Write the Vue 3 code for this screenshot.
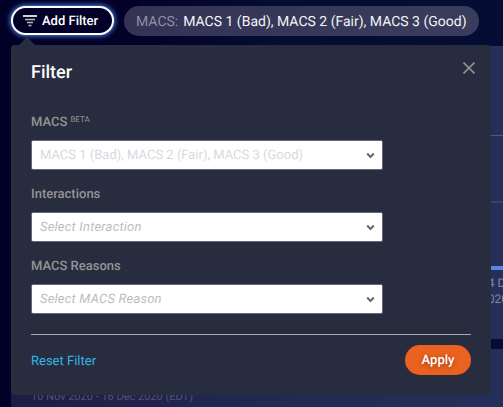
<script setup>
const chipText = 'MACS 1 (Bad), MACS 2 (Fair), MACS 3 (Good)'
const fields = [
  { label: 'MACS', tag: 'BETA', text: chipText, filled: true },
  { label: 'Interactions', text: 'Select Interaction' },
  { label: 'MACS Reasons', text: 'Select MACS Reason' }
]
</script>

<template>
  <div class="page">
    <header class="toolbar">
      <button class="add" type="button">
        <svg width="14" height="12" viewBox="0 0 14 12">
          <path d="M0 1H14" stroke="#d2d0d3" stroke-width="2" />
          <path d="M2 4.5H12M4 7.5H10M5.5 10.5H8.5" stroke="#b9b7bf" stroke-width="1.3" />
        </svg>
        <span>Add Filter</span>
      </button>
      <div class="chip"><span class="chip-key">MACS:</span><span>{{ chipText }}</span></div>
    </header>

    <main class="dashboard">
      <section class="card chart">
        <div class="plot">
          <div class="grid thin"></div>
          <div class="grid thick"></div>
          <div class="series"></div>
        </div>
        <div class="tick">14 Dec<br />2020</div>
      </section>
      <section class="card range">10 Nov 2020 - 16 Dec 2020 (EDT)</section>
    </main>

    <div class="popover">
      <div class="head">
        <h2>Filter</h2>
        <svg class="close" width="12" height="12" viewBox="0 0 12 12">
          <path d="M.5 .5L11.5 11.5M11.5 .5L.5 11.5" stroke="#92938f" stroke-width="1.6" fill="none" />
        </svg>
      </div>
      <div v-for="f in fields" :key="f.label" class="field">
        <div class="label">{{ f.label }}<span v-if="f.tag" class="beta">{{ f.tag }}</span></div>
        <div class="select" :class="{ filled: f.filled }">
          <span>{{ f.text }}</span>
          <svg width="9" height="7" viewBox="0 0 9 7">
            <path d="M1.2 1.5L4.5 5L7.8 1.5" stroke="#686868" stroke-width="1.9" fill="none" />
          </svg>
        </div>
      </div>
      <footer class="foot">
        <a class="reset">Reset Filter</a>
        <button class="apply" type="button">Apply</button>
      </footer>
    </div>
  </div>
</template>

<style>
body {
  margin: 0;
  overflow: hidden;
}
</style>

<style scoped>
.page {
  position: relative;
  width: 503px;
  height: 407px;
  overflow: hidden;
  box-sizing: border-box;
  background: linear-gradient(90deg, #010026 0, #02012a 130px, #040c31 270px, #050d34 503px);
  font-family: Roboto, sans-serif;
  text-rendering: geometricPrecision;
  white-space: nowrap;
}
.toolbar {
  display: flex;
  gap: 10px;
  height: 46px;
  padding: 6px 0 0 11px;
  box-sizing: border-box;
}
.add {
  display: flex;
  align-items: center;
  gap: 5px;
  width: 103px;
  height: 29px;
  padding: 0 0 0 10px;
  box-sizing: border-box;
  border: 2px solid #fff;
  border-radius: 15px;
  background: #020027;
  box-shadow: 0 0 5px 1px #4c82e8;
  color: #fff;
  font: 500 13px/16px Roboto, sans-serif;
  text-rendering: inherit;
}
.add span {
  padding-top: 2px;
}
.chip {
  display: flex;
  gap: 5px;
  width: 355px;
  height: 30px;
  padding-left: 12px;
  box-sizing: border-box;
  border-radius: 15px;
  background: linear-gradient(90deg, #343355, #393d5d);
  color: #f4f4f6;
  font-size: 14px;
  line-height: 32px;
}
.chip-key {
  color: #8f8fa4;
}
.dashboard {
  display: flex;
  flex-direction: column;
  gap: 10px;
  padding-left: 11px;
}
.card {
  background: linear-gradient(90deg, #1f1c43 0, #202850 220px, #25305a 100%);
}
.chart {
  display: flex;
  flex-direction: column;
  height: 293px;
  box-sizing: border-box;
}
.plot {
  display: flex;
  flex-direction: column;
  height: 224px;
  padding-top: 89px;
  box-sizing: border-box;
}
.grid.thin {
  height: 1px;
  background: #55596f;
}
.grid.thick {
  height: 2px;
  margin-top: 65px;
  background: #3d435f;
}
.series {
  height: 3px;
  margin-top: 63px;
  background: #4d86f5;
  border-top: 1px solid #7a86a8;
}
.tick {
  padding: 5px 0 0 470px;
  color: #82869a;
  font-size: 12px;
  line-height: 16px;
}
.range {
  height: 58px;
  padding: 39px 0 0 20px;
  box-sizing: border-box;
  color: #505575;
  font-size: 11px;
  line-height: 17px;
}
.popover {
  position: absolute;
  left: 11px;
  top: 45px;
  width: 480px;
  height: 350px;
  padding: 0 20px;
  box-sizing: border-box;
  border-radius: 4px;
  background: #282c3f;
}
.popover::before {
  content: '';
  position: absolute;
  left: 8px;
  top: -8px;
  border: 8px solid transparent;
  border-top: 0;
  border-bottom-color: #282c3f;
}
.head {
  display: flex;
  justify-content: space-between;
  height: 67px;
}
h2 {
  margin: 17px 0 0;
  color: #fff;
  font-size: 18px;
  font-weight: 500;
  line-height: 22px;
}
.close {
  margin: 17px -4px 0 0;
}
.field {
  height: 72px;
}
.label {
  display: flex;
  height: 28px;
  color: #949494;
  font-size: 13px;
  font-weight: 500;
  line-height: 22px;
}
.beta {
  margin-left: 3px;
  font-size: 8px;
  font-weight: 400;
  line-height: 15px;
}
.select {
  display: flex;
  align-items: center;
  justify-content: space-between;
  width: 352px;
  height: 30px;
  padding: 0 7px 0 8px;
  box-sizing: border-box;
  border: 1px solid #65677a;
  border-radius: 2px;
  background: #fff;
  color: #bdbdbd;
  font-size: 13px;
  font-style: italic;
  letter-spacing: 0.21px;
}
.select.filled {
  color: #d9d9df;
  font-style: normal;
  letter-spacing: 0;
}
.foot {
  display: flex;
  align-items: flex-start;
  justify-content: space-between;
  margin-top: 6px;
  padding-top: 10px;
  border-top: 1px solid #a9a9ab;
}
.reset {
  color: #35b5e5;
  font-size: 13px;
  line-height: 33px;
}
.apply {
  width: 66px;
  height: 30px;
  padding: 2px 0 0;
  border: 0;
  border-radius: 15px;
  background: #e9621f;
  color: #fff;
  font: 500 13px/28px Roboto, sans-serif;
  text-rendering: inherit;
  text-shadow: 0 1px 4px rgba(90, 30, 0, 0.55);
}
</style>
